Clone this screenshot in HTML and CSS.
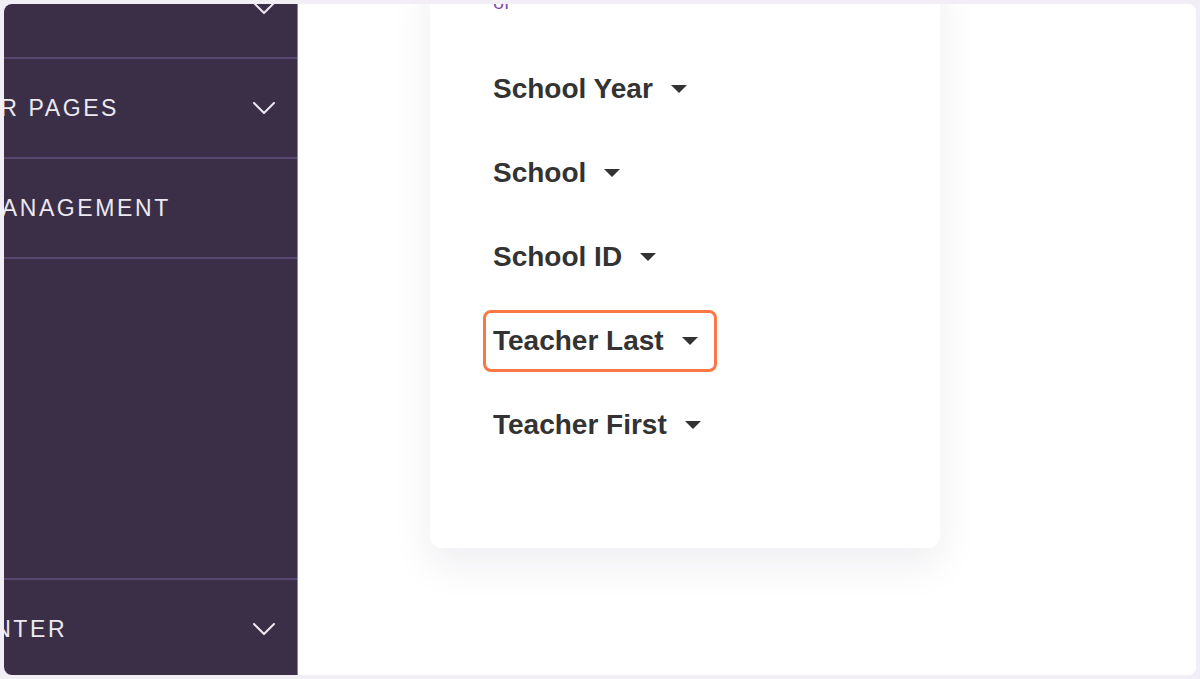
FILE: index.html
```html
<!DOCTYPE html>
<html lang="en">
<head>
    <meta charset="UTF-8">
    <meta name="viewport" content="width=device-width, initial-scale=1.0">
    <title>Report Columns</title>
    <link rel="stylesheet" href="styles.css">
</head>
<body>
    <div class="frame">
        <!-- Sidebar (scrolled, partly cut off) -->
        <nav class="sidebar">
            <div class="nav-item nav-first">
                <span class="nav-label"></span>
                <svg class="chevron" width="22" height="12" viewBox="0 0 22 12"><polyline points="1,1 11,11 21,1"/></svg>
            </div>
            <div class="nav-item">
                <span class="nav-label label-pages">OTHER PAGES</span>
                <svg class="chevron" width="22" height="12" viewBox="0 0 22 12"><polyline points="1,1 11,11 21,1"/></svg>
            </div>
            <div class="nav-item">
                <span class="nav-label label-manage">MANAGEMENT</span>
            </div>
            <div class="nav-item nav-last">
                <span class="nav-label label-center">CENTER</span>
                <svg class="chevron" width="22" height="12" viewBox="0 0 22 12"><polyline points="1,1 11,11 21,1"/></svg>
            </div>
        </nav>

        <main class="content">
            <div class="card">
                <p class="intro">of</p>
                <div class="field-row">
                    <span class="field">School Year <i class="caret"></i></span>
                </div>
                <div class="field-row">
                    <span class="field">School <i class="caret"></i></span>
                </div>
                <div class="field-row">
                    <span class="field">School ID <i class="caret"></i></span>
                </div>
                <div class="field-row">
                    <span class="field active">Teacher Last <i class="caret"></i></span>
                </div>
                <div class="field-row">
                    <span class="field">Teacher First <i class="caret"></i></span>
                </div>
            </div>
        </main>
    </div>
</body>
</html>
```

FILE: styles.css
```css
body {
    margin: 0;
    padding: 0;
    background-color: #f1eff5;
    font-family: "Liberation Sans", Arial, sans-serif;
}
.frame {
    display: flex;
    margin: 4px;
    height: 671px;
    border-radius: 8px;
    overflow: hidden;
    background-color: #ffffff;
}
.sidebar {
    display: flex;
    flex-direction: column;
    width: 293px;
    flex-shrink: 0;
    background-color: #3a2f47;
    border-right: 1px solid #8d8798;
    overflow: hidden;
}
.nav-item {
    display: flex;
    align-items: center;
    justify-content: space-between;
    box-sizing: border-box;
    height: 100px;
    flex-shrink: 0;
    padding-right: 22px;
    border-bottom: 2px solid #564971;
}
.nav-first {
    margin-top: -45px;
}
.nav-last {
    margin-top: auto;
    margin-bottom: -3px;
    border-bottom: none;
    border-top: 2px solid #564971;
}
.nav-label {
    color: #ece9f1;
    font-size: 23px;
    letter-spacing: 2.6px;
    white-space: nowrap;
}
.label-pages {
    margin-left: -78px;
}
.label-manage {
    margin-left: -24px;
}
.label-center {
    margin-left: -47px;
}
.chevron {
    fill: none;
    stroke: #ece9f1;
    stroke-width: 2;
    stroke-linecap: round;
    stroke-linejoin: round;
}
.content {
    flex: 1;
    background-color: #ffffff;
}
.card {
    box-sizing: border-box;
    width: 510px;
    height: 584px;
    margin: -40px 0 0 132px;
    padding: 26px 0 0 63px;
    background-color: #ffffff;
    border-radius: 12px;
    box-shadow: 0 16px 40px rgba(40, 30, 60, 0.08);
}
.intro {
    margin: 0 0 33px;
    font-size: 20px;
    line-height: 24px;
    color: #8350b0;
}
.field-row {
    display: flex;
    align-items: center;
    height: 84px;
}
.field {
    display: inline-flex;
    align-items: center;
    gap: 18px;
    height: 62px;
    box-sizing: border-box;
    margin-left: -10px;
    padding: 0 16px 0 7px;
    border: 3px solid transparent;
    border-radius: 8px;
    font-size: 28px;
    font-weight: bold;
    color: #333333;
}
.field.active {
    border-color: #fb7745;
}
.caret {
    width: 0;
    height: 0;
    border-left: 8px solid transparent;
    border-right: 8px solid transparent;
    border-top: 8px solid #333333;
}
```
